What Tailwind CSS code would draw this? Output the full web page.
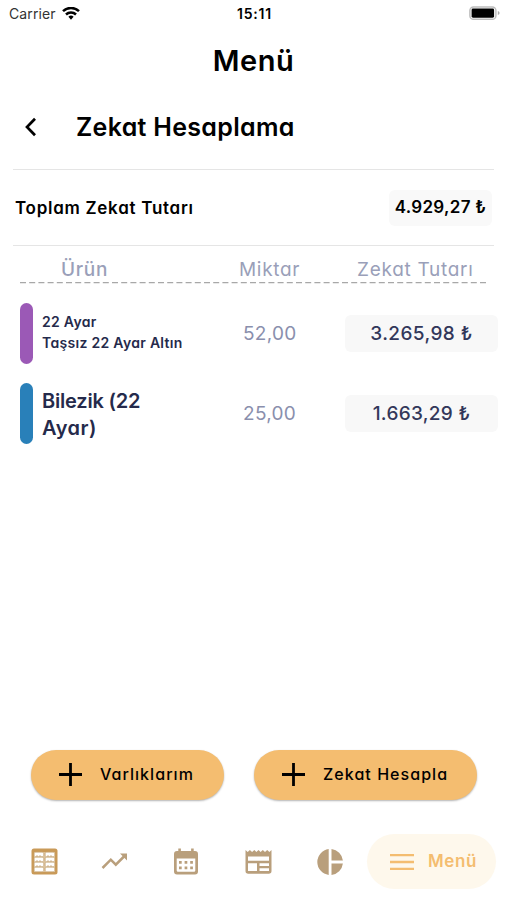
<!DOCTYPE html>
<html lang="tr">
<head>
<meta charset="utf-8">
<title>Zekat Hesaplama</title>
<script src="https://cdn.jsdelivr.net/npm/@tailwindcss/browser@4"></script>
</head>
<body class="bg-white">
<div class="flex h-[900px] w-[507px] flex-col overflow-hidden whitespace-nowrap bg-white font-['Inter','Liberation_Sans',sans-serif] text-black [font-feature-settings:'cv11']">
  <div class="grid h-[28px] shrink-0 grid-cols-3 items-center pl-[9px] pr-[7px] [font-feature-settings:normal]">
    <div class="flex items-center gap-[6px]">
      <span class="text-[14px] leading-[28px] tracking-[0.1px] text-[#333]">Carrier</span>
      <svg class="h-[14px] w-[18px]" viewBox="0 0 18 14" fill="none" stroke="#000" stroke-width="2.5"><path d="M1 4.2a11.5 11.5 0 0 1 16 0"/><path d="M4 7.500a7.2 7.2 0 0 1 10 0"/><path d="M6.4 9.800 9 12.700l2.6-2.900a3.800 3.800 0 0 0-5.200 0z" fill="#000" stroke="none"/></svg>
    </div>
    <span class="text-center text-[14px] font-semibold leading-[28px] tracking-[0.8px]">15:11</span>
    <svg class="h-[14px] w-[31px] -translate-y-px justify-self-end" viewBox="0 0 31 14"><rect x=".9" y=".9" width="26" height="12.4" rx="3.6" fill="#fff" stroke="#bdbdbd" stroke-width="1.5"/><rect x="2.600" y="2.500" width="22.500" height="9.200" rx="1.4"/><path d="M28.8 5v4q1.8-.6 1.8-2t-1.8-2z" fill="#aaa"/></svg>
  </div>
  <h1 class="flex h-[65px] shrink-0 items-center justify-center text-[29px] font-semibold tracking-[0.5px]">Menü</h1>
  <div class="flex h-[69px] shrink-0 items-center pl-[24px]">
    <svg class="mb-[2px] h-[20px] w-[13px]" viewBox="0 0 13 20" fill="none" stroke="#000" stroke-width="2.7"><path d="M11 1.8 3 10l8 8.2"/></svg>
    <h2 class="pl-[39px] text-[25px] font-semibold tracking-[0.3px]">Zekat Hesaplama</h2>
  </div>
  <section class="mx-[13px] mt-[7px] flex h-[77px] shrink-0 items-center justify-between border-y border-[#e5e5e5] pl-[2px] pr-[2px]">
    <span class="pt-[2px] text-[17px] font-semibold tracking-[0.72px]">Toplam Zekat Tutarı</span>
    <span class="flex h-[36px] w-[103px] items-center justify-center rounded-[6px] bg-[#f9f9f9] pt-px text-[17px] font-semibold tracking-[0.3px]">4.929,27 ₺</span>
  </section>
  <div class="ml-[20px] mr-[20px] grid h-[36px] shrink-0 grid-cols-[219px_118px_130px] pt-[10px] text-[19px] leading-[28px] tracking-[0.7px] text-[#9a9fb9]">
    <span class="pl-[41px] font-medium">Ürün</span><span>Miktar</span><span>Zekat Tutarı</span>
  </div>
  <svg class="ml-[20px] h-[2px] w-[467px] shrink-0" viewBox="0 0 467 2"><path d="M0 .5H467" stroke="#a8a8a8" stroke-width="1.5" stroke-dasharray="6 3.2"/></svg>
  <div class="mt-[19px] flex h-[61px] shrink-0 items-center pl-[20px] pr-[9px]">
    <div class="h-[61px] w-[13px] rounded-full bg-[#9b59b6]"></div>
    <div class="ml-[9px] w-[201px] pb-[3px] text-[14px] font-semibold leading-[21px] tracking-[0.3px] text-[#252a4b]"><p>22 Ayar</p><p>Taşsız 22 Ayar Altın</p></div>
    <span class="w-[102px] pt-[2px] text-[19px] tracking-[0.3px] text-[#8a8fad]">52,00</span>
    <span class="flex h-[37px] w-[153px] items-center justify-center rounded-[6px] bg-[#f8f8f8] pt-[2px] text-[19px] font-medium tracking-[0.4px] text-[#32375a]">3.265,98 ₺</span>
  </div>
  <div class="mt-[19px] flex h-[61px] shrink-0 items-center pl-[20px] pr-[9px]">
    <div class="h-[61px] w-[13px] rounded-full bg-[#2980b9]"></div>
    <div class="ml-[9px] w-[201px] pt-[2px] text-[20px] font-semibold leading-[27px] text-[#252a4b]"><p class="tracking-[-0.2px]">Bilezik (22</p><p class="tracking-[0.5px]">Ayar)</p></div>
    <span class="w-[102px] pt-[2px] text-[19px] tracking-[0.3px] text-[#8a8fad]">25,00</span>
    <span class="flex h-[37px] w-[153px] items-center justify-center rounded-[6px] bg-[#f8f8f8] pt-[2px] text-[19px] font-medium tracking-[0.3px] text-[#32375a]">1.663,29 ₺</span>
  </div>
  <div class="mt-auto flex shrink-0 gap-[30px] pl-[31px] text-[16px] font-medium tracking-[1.05px]">
    <div class="flex h-[50px] w-[193px] items-center rounded-full bg-[#f4bd70] pb-[2px] pl-[28px] shadow-[0_1px_2px_rgba(0,0,0,0.3)]">
      <svg class="h-[23px] w-[23px]" viewBox="0 0 23 23" stroke="#000" stroke-width="2.8"><path d="M11.5 0v23M0 11.5h23"/></svg>
      <span class="pl-[18px]">Varlıklarım</span>
    </div>
    <div class="flex h-[50px] w-[223px] items-center rounded-full bg-[#f4bd70] pb-[2px] pl-[28px] shadow-[0_1px_2px_rgba(0,0,0,0.3)]">
      <svg class="h-[23px] w-[23px]" viewBox="0 0 23 23" stroke="#000" stroke-width="2.8"><path d="M11.5 0v23M0 11.5h23"/></svg>
      <span class="pl-[18px]">Zekat Hesapla</span>
    </div>
  </div>
  <nav class="mb-[11px] mt-[34px] flex h-[55px] shrink-0 items-center pl-[31px] text-[#b99f7c]">
    <svg class="h-[27px] w-[27px]" viewBox="0 0 27 27"><rect x=".5" y=".5" width="26" height="26" rx="2.5" fill="#c99a58"/><rect x="3" y="4" width="21" height="20" fill="#dcc19a"/><g fill="#fff" stroke="#c8ab80" stroke-width=".7"><rect x="3.2" y="4.2" width="9.5" height="4.5" rx="1.5"/><rect x="14.2" y="4.2" width="9.5" height="4.5" rx="1.5"/><rect x="3.2" y="9.2" width="9.5" height="4.5" rx="1.5"/><rect x="14.2" y="9.2" width="9.5" height="4.5" rx="1.5"/><rect x="3.2" y="14.2" width="9.5" height="4.5" rx="1.5"/><rect x="14.2" y="14.2" width="9.5" height="4.5" rx="1.5"/><rect x="3.2" y="19.2" width="9.5" height="4.5" rx="1.5"/><rect x="14.2" y="19.2" width="9.5" height="4.5" rx="1.5"/></g><path d="M5 8h6M16 8h6M5 13h6M16 13h6M5 18h6M16 18h6" fill="none" stroke="#c9a77a" stroke-width=".8" stroke-dasharray="2 1"/></svg>
    <svg class="ml-[43px] h-[18px] w-[27px]" viewBox="0 0 27 18" fill="none" stroke="currentColor" stroke-width="2.5"><path d="m1.500 15 8.300-8.300 5 5L23.500 3"/><path d="M19 .5h7v7z" fill="currentColor" stroke="none"/></svg>
    <svg class="ml-[46px] h-[27px] w-[24px]" viewBox="0 0 24 27" fill="currentColor"><path fill-rule="evenodd" d="M4.300.5h2.600v2.500h10.200V.5h2.600v2.500H21a3 3 0 0 1 3 3V23.500a3 3 0 0 1-3 3H3a3 3 0 0 1-3-3V6a3 3 0 0 1 3-3h1.300zM2.700 10.500V22.500a1.300 1.300 0 0 0 1.300 1.300h16a1.300 1.300 0 0 0 1.300-1.300V10.500z"/><path d="M5 13h2.700v2.700H5zm5.600 0h2.700v2.700h-2.700zm5.600 0h2.700v2.700h-2.700zM5 18.500h2.700v2.700H5zm5.600 0h2.700v2.700h-2.700zm5.600 0h2.700v2.700h-2.700z"/></svg>
    <svg class="ml-[47px] h-[25px] w-[27px]" viewBox="0 0 27 25" fill="currentColor"><path fill-rule="evenodd" d="M.5 1 2.700 3 4.900 1 7.100 3 9.300 1l2.100 2 2.100-2 2.100 2 2.200-2L20 3l2.200-2 2.200 2 2.100-2v21a2.700 2.700 0 0 1-2.700 2.700H3.200A2.700 2.700 0 0 1 .5 22zM3 7.500v4.200h21V7.500zm0 6.700V22h9v-7.800zm11.500 0v2.700H24v-2.700zm0 5V22H24v-2.800z"/></svg>
    <svg class="ml-[45px] h-[26px] w-[26px]" viewBox="0 0 26 26" fill="currentColor"><path d="M11.700.1v25.800a13 13 0 0 1 0-25.800M14.500.1A13 13 0 0 1 25.900 11.500H14.500zM14.500 14.500h11.400A13 13 0 0 1 14.500 25.900z"/></svg>
    <div class="ml-[24px] flex h-[55px] w-[129px] items-center rounded-full bg-[#fef8ec] pl-[23px] text-[#f4bd70]">
      <svg class="h-[16px] w-[24px]" viewBox="0 0 24 16" stroke="currentColor" stroke-width="2.300"><path d="M0 1.200h24M0 8h24M0 14.800h24"/></svg>
      <span class="pl-[14px] text-[17px] font-semibold tracking-[0.6px]">Menü</span>
    </div>
  </nav>
</div>
</body>
</html>
